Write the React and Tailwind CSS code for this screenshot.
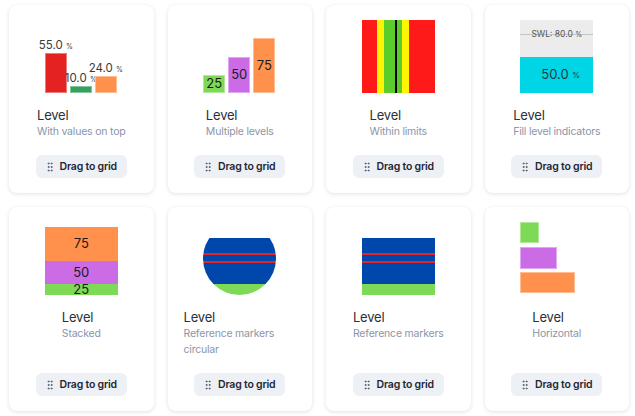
import React from "react";
import { GripVertical } from "lucide-react";

const barBorder = "border border-white/40";

// values on top
const ValuesOnTop = () => {
  const bars = [
    { v: "55.0", h: 40, c: "bg-[#e42222]" },
    { v: "10.0", h: 7, c: "bg-[#35a05f]" },
    { v: "24.0", h: 17, c: "bg-[#ff914d]" },
  ];
  return (
    <div className="flex h-full w-full items-end gap-[3px]">
      {bars.map(({ v, h, c }) => (
        <div key={v} className="flex w-[22px] flex-col items-center">
          <div className="whitespace-nowrap text-[11.5px] leading-[12px] text-[#3b3b3b]">
            {v} <span className="text-[7px]">%</span>
          </div>
          <div className={`w-full ${c} ${barBorder}`} style={{ height: h }} />
        </div>
      ))}
    </div>
  );
};

// multiple levels
const MultipleLevels = () => {
  const bars = [
    { v: 25, h: 18, c: "bg-[#7ed957]" },
    { v: 50, h: 36, c: "bg-[#cb6ce6]" },
    { v: 75, h: 55, c: "bg-[#ff914d]" },
  ];
  return (
    <div className="flex h-full w-full items-end gap-[3px]">
      {bars.map(({ v, h, c }) => (
        <div
          key={v}
          className={`flex w-[22px] items-center justify-center text-[13px] text-[#1c1c1c] ${c} ${barBorder}`}
          style={{ height: h }}
        >
          {v}
        </div>
      ))}
    </div>
  );
};

// within limits
const WithinLimits = () => {
  const stripes = [
    { w: 15, c: "bg-[#ff1a1a]" },
    { w: 7, c: "bg-[#fff500]" },
    { w: 11, c: "bg-[#5bcc2a]" },
    { w: 2, c: "bg-black" },
    { w: 5, c: "bg-[#5bcc2a]" },
    { w: 7, c: "bg-[#fff500]" },
    { w: 26, c: "bg-[#ff1a1a]" },
  ];
  return (
    <div className="flex h-full w-full">
      {stripes.map(({ w, c }, i) => (
        <div key={i} className={`h-full ${c}`} style={{ width: w }} />
      ))}
    </div>
  );
};

// fill level
const FillLevel = () => (
  <div className="relative flex h-full w-full flex-col justify-end bg-[#ececec]">
    <div className="absolute left-0 right-0 top-[14px] h-px bg-[#c4c4c4]" />
    <div className="absolute left-0 right-0 top-[9px] text-center text-[8.5px] leading-[11px] text-[#555]">
      SWL: 80.0 <span className="text-[7px]">%</span>
    </div>
    <div className="flex h-[36px] items-center justify-center bg-[#00d5e6] pl-2 text-[13px] text-[#1e3a44]">
      50.0&nbsp;<span className="text-[8px]">%</span>
    </div>
  </div>
);

// stacked
const Stacked = () => (
  <div className="flex h-full w-full flex-col justify-end text-[13px] text-[#1c1c1c]">
    <div className="flex h-[34px] items-center justify-center bg-[#ff914d]">75</div>
    <div className="flex h-[23px] items-center justify-center bg-[#cb6ce6]">50</div>
    <div className="flex h-[11px] items-center justify-center bg-[#7ed957] leading-none">25</div>
  </div>
);

// reference markers
const Markers = ({ round }) => (
  <div className={`flex h-full w-full flex-col overflow-hidden ${round ? "rounded-full" : ""}`}>
    <div className="h-[16px]" />
    <div className="h-[15px] bg-[#0047ab]" />
    <div className="h-[2px] bg-[#e3242b]" />
    <div className="h-[6px] bg-[#0047ab]" />
    <div className="h-[2px] bg-[#e3242b]" />
    <div className="h-[21px] bg-[#0047ab]" />
    <div className="h-[11px] bg-[#7ed957]" />
  </div>
);

// horizontal
const Horizontal = () => (
  <div className="flex h-full w-full flex-col gap-[3.5px]">
    <div className={`h-[21px] w-[19px] bg-[#7ed957] ${barBorder}`} />
    <div className={`h-[22px] w-[37px] bg-[#cb6ce6] ${barBorder}`} />
    <div className={`h-[21px] w-[55px] bg-[#ff914d] ${barBorder}`} />
  </div>
);

const cards = [
  { sub: "With values on top", preview: <ValuesOnTop /> },
  { sub: "Multiple levels", preview: <MultipleLevels /> },
  { sub: "Within limits", preview: <WithinLimits /> },
  { sub: "Fill level indicators", preview: <FillLevel /> },
  { sub: "Stacked", preview: <Stacked /> },
  { sub: "Reference markers circular", preview: <Markers round /> },
  { sub: "Reference markers", preview: <Markers /> },
  { sub: "Horizontal", preview: <Horizontal /> },
];

const Card = ({ sub, preview }) => (
  <div className="flex flex-col items-center rounded-lg bg-white px-4 pb-[15px] pt-[15px] shadow-[0_1px_4px_rgba(0,0,0,0.12)]">
    <div className="h-[73px] w-[73px]">{preview}</div>
    <div className="mt-[13px] w-fit max-w-full text-left">
      <div className="text-[13px] leading-[18px] tracking-[-0.2px] text-[#2b303b]">Level</div>
      <div className="text-[10.5px] leading-4 tracking-[-0.2px] text-[#8b95a7]">{sub}</div>
    </div>
    <div className="mt-auto pt-[15px]">
      <button className="flex h-[23px] items-center gap-1 rounded-md bg-[#edf1f6] pl-2 pr-[10px] text-[10.5px] font-semibold tracking-[-0.2px] text-[#1f2633]">
        <GripVertical size={12} className="text-[#555b66]" />
        Drag to grid
      </button>
    </div>
  </div>
);

const App = () => {
  return (
    <div
      className="min-h-screen bg-white pl-[9px] pr-[6px] pt-[5px]"
      style={{ fontFamily: "Inter, 'Noto Sans', sans-serif" }}
    >
      <div className="grid grid-cols-4 gap-x-[14px] gap-y-[14px]">
        {cards.map((c) => (
          <Card key={c.sub} {...c} />
        ))}
      </div>
    </div>
  );
};

export default App;
